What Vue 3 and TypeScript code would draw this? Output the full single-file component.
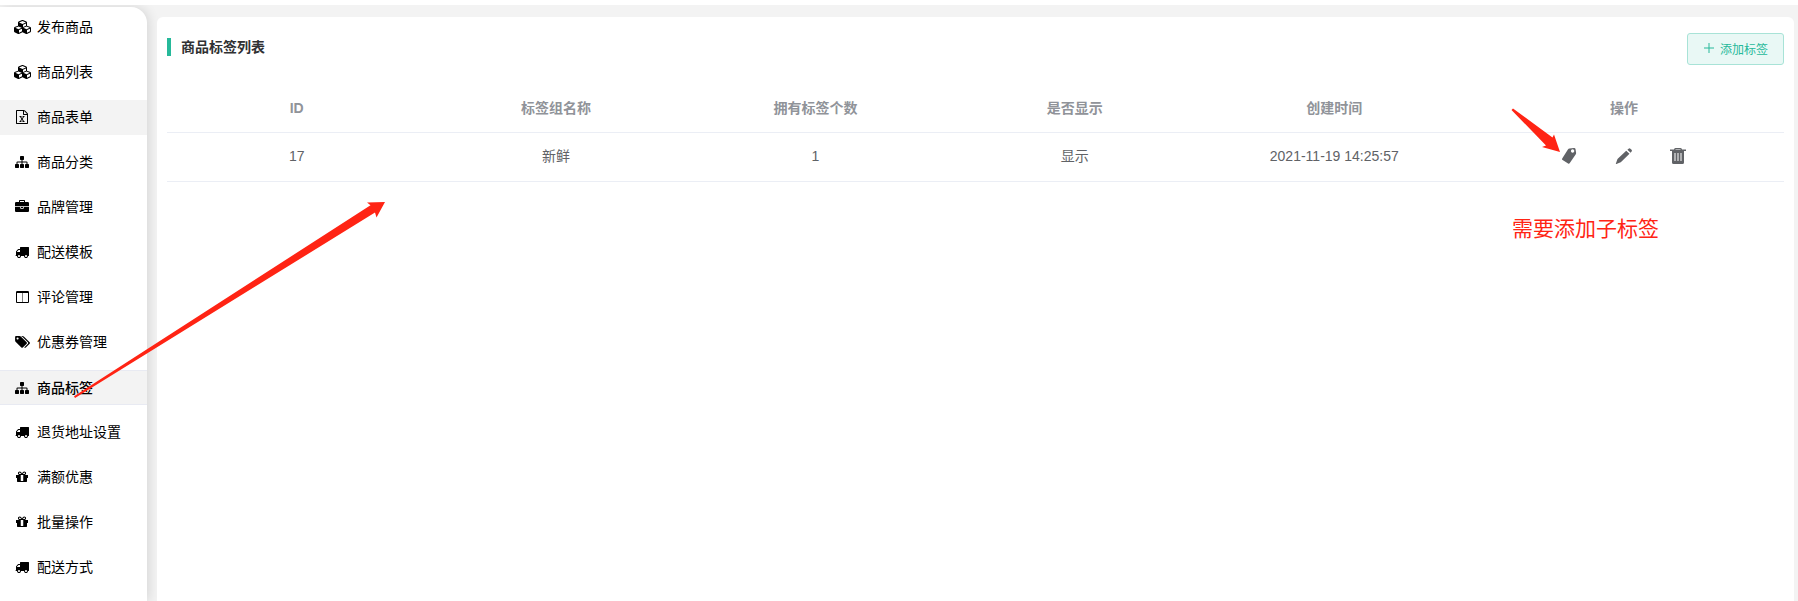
<script setup lang="ts">
interface Icon {
  width: number
  box: string
  path: string
}

interface MenuItem {
  label: string
  icon: string
  state?: 'hover' | 'active'
}

interface TagGroup {
  id: number
  name: string
  count: number
  visible: boolean
  createdAt: string
}

const icons: Record<string, Icon> = {
  cubes: {
    width: 17,
    box: '0 0 2176 1792',
    path: 'M640 1632l384-192v-314l-384 164v342zm-64-454l404-173-404-173-404 173zm1088 454l384-192v-314l-384 164v342zm-64-454l404-173-404-173-404 173zm-448-293l384-165v-266l-384 164v267zm-64-379l441-189-441-189-441 189zm1088 518v416q0 36-19 67t-52 47l-448 224q-25 14-57 14t-57-14l-448-224q-4-2-7-4-2 2-7 4l-448 224q-25 14-57 14t-57-14l-448-224q-33-16-52-47t-19-67v-416q0-38 21.5-70t56.5-48l434-186v-400q0-38 21.5-70t56.5-48l448-192q23-10 50-10t50 10l448 192q35 16 56.5 48t21.5 70v400l434 186q36 16 57 48t21 70z',
  },
  excel: {
    width: 14,
    box: '0 0 1792 1792',
    path: 'M1596 380q28 28 48 76t20 88v1152q0 40-28 68t-68 28h-1344q-40 0-68-28t-28-68v-1600q0-40 28-68t68-28h896q40 0 88 20t76 48zm-444-244v376h376q-10-29-22-41l-313-313q-12-12-41-22zm384 1528v-1024h-416q-40 0-68-28t-28-68v-416h-768v1536h1280zm-979-234v106h281v-106h-75l103-161q5-7 10-16.5t7.5-13.5 3.5-4h2q1 4 5 10 2 4 4.5 7.5t6 8 6.5 8.5l107 161h-76v106h291v-106h-68l-192-273 195-282h67v-107h-279v107h74l-103 159q-4 7-10 16.5t-9 13.5l-2 3h-2q-1-4-5-10-6-11-17-23l-106-159h76v-107h-290v107h68l189 272-194 283h-68z',
  },
  sitemap: {
    width: 14,
    box: '0 0 1792 1792',
    path: 'M1792 1248v320q0 40-28 68t-68 28h-320q-40 0-68-28t-28-68v-320q0-40 28-68t68-28h96v-192h-512v192h96q40 0 68 28t28 68v320q0 40-28 68t-68 28h-320q-40 0-68-28t-28-68v-320q0-40 28-68t68-28h96v-192h-512v192h96q40 0 68 28t28 68v320q0 40-28 68t-68 28h-320q-40 0-68-28t-28-68v-320q0-40 28-68t68-28h96v-192q0-52 38-90t90-38h512v-192h-96q-40 0-68-28t-28-68v-320q0-40 28-68t68-28h320q40 0 68 28t28 68v320q0 40-28 68t-68 28h-96v192h512q52 0 90 38t38 90v192h96q40 0 68 28t28 68z',
  },
  briefcase: {
    width: 14,
    box: '0 0 1792 1792',
    path: 'M640 256h512v-128h-512v128zm1152 640v480q0 66-47 113t-113 47h-1472q-66 0-113-47t-47-113v-480h672v160q0 26 19 45t45 19h320q26 0 45-19t19-45v-160h672zm-768 0v128h-256v-128h256zm768-480v384h-1792v-384q0-66 47-113t113-47h352v-160q0-40 28-68t68-28h576q40 0 68 28t28 68v160h352q66 0 113 47t47 113z',
  },
  truck: {
    width: 14,
    box: '0 0 1792 1792',
    path: 'M640 1408q0-52-38-90t-90-38-90 38-38 90 38 90 90 38 90-38 38-90zm-384-512h384v-256h-158q-13 0-22 9l-195 195q-9 9-9 22v30zm1280 512q0-52-38-90t-90-38-90 38-38 90 38 90 90 38 90-38 38-90zm256-1088v1024q0 15-4 26.5t-13.5 18.5-16.5 11.5-23.5 6-22.5 2-25.5 0-22.5-.5q0 106-75 181t-181 75-181-75-75-181h-384q0 106-75 181t-181 75-181-75-75-181h-64q-3 0-22.5.5t-25.5 0-22.5-2-23.5-6-16.5-11.5-13.5-18.5-4-26.5q0-26 19-45t45-19v-320q0-8-.5-35t0-38 2.5-34.5 6.5-37 14-30.5 22.5-30l198-198q19-19 50.5-32t58.5-13h160v-192q0-26 19-45t45-19h1024q26 0 45 19t19 45z',
  },
  columns: {
    width: 13,
    box: '0 0 1664 1792',
    path: 'M160 1536h672v-1152h-704v1120q0 13 9.5 22.5t22.5 9.5zm1376-32v-1120h-640v1152h608q13 0 22.5-9.5t9.5-22.5zm128-1216v1216q0 66-47 113t-113 47h-1344q-66 0-113-47t-47-113v-1216q0-66 47-113t113-47h1344q66 0 113 47t47 113z',
  },
  tags: {
    width: 15,
    box: '0 0 1899 1792',
    path: 'M448 448q0-53-37.5-90.5t-90.5-37.5-90.5 37.5-37.5 90.5 37.5 90.5 90.5 37.5 90.5-37.5 37.5-90.5zm1067 576q0 53-37 90l-491 492q-39 37-91 37-53 0-90-37l-715-716q-38-37-64.5-101t-26.5-117v-416q0-52 38-90t90-38h416q53 0 117 26.5t102 64.5l715 714q37 39 37 91zm384 0q0 53-37 90l-491 492q-39 37-91 37-36 0-59-14t-53-45l470-470q37-37 37-90 0-52-37-91l-715-714q-38-38-102-64.5t-117-26.5h224q53 0 117 26.5t102 64.5l715 714q37 39 37 91z',
  },
  gift: {
    width: 14,
    box: '0 0 1792 1792',
    path: 'M1056 1356v-716h-320v716q0 25 18 38.5t46 13.5h192q28 0 46-13.5t18-38.5zm-456-844h195l-126-161q-26-31-69-31-40 0-68 28t-28 68 28 68 68 28zm688-96q0-40-28-68t-68-28q-43 0-69 31l-125 161h194q40 0 68-28t28-68zm376 256v320q0 14-9 23t-23 9h-96v416q0 40-28 68t-68 28h-1088q-40 0-68-28t-28-68v-416h-96q-14 0-23-9t-9-23v-320q0-14 9-23t23-9h440q-93 0-158.5-65.5t-65.5-158.5 65.5-158.5 158.5-65.5q107 0 168 77l128 165 128-165q61-77 168-77 93 0 158.5 65.5t65.5 158.5-65.5 158.5-158.5 65.5h440q14 0 23 9t9 23z',
  },
}

const menu: MenuItem[] = [
  { label: '发布商品', icon: 'cubes' },
  { label: '商品列表', icon: 'cubes' },
  { label: '商品表单', icon: 'excel', state: 'hover' },
  { label: '商品分类', icon: 'sitemap' },
  { label: '品牌管理', icon: 'briefcase' },
  { label: '配送模板', icon: 'truck' },
  { label: '评论管理', icon: 'columns' },
  { label: '优惠券管理', icon: 'tags' },
  { label: '商品标签', icon: 'sitemap', state: 'active' },
  { label: '退货地址设置', icon: 'truck' },
  { label: '满额优惠', icon: 'gift' },
  { label: '批量操作', icon: 'gift' },
  { label: '配送方式', icon: 'truck' },
]

const headers: string[] = ['ID', '标签组名称', '拥有标签个数', '是否显示', '创建时间', '操作']

const groups: TagGroup[] = [
  { id: 17, name: '新鲜', count: 1, visible: true, createdAt: '2021-11-19 14:25:57' },
]
</script>

<template>
  <div class="page">
    <nav class="sidebar">
      <a
        v-for="item in menu"
        :key="item.label"
        href="#"
        class="menu-item"
        :class="item.state"
      >
        <span class="menu-icon">
          <svg :width="icons[item.icon].width" height="14" :viewBox="icons[item.icon].box" aria-hidden="true">
            <path :d="icons[item.icon].path" />
          </svg>
        </span>
        <span>{{ item.label }}</span>
      </a>
    </nav>

    <main class="panel">
      <header class="panel-head">
        <h1 class="title">商品标签列表</h1>
        <button type="button" class="add">
          <svg width="10" height="10" viewBox="0 0 10 10" aria-hidden="true">
            <path d="M5 0v10M0 5h10" />
          </svg>
          <span>添加标签</span>
        </button>
      </header>

      <table class="table">
        <colgroup>
          <col v-for="n in 5" :key="n" />
          <col class="col-actions" />
        </colgroup>
        <thead>
          <tr>
            <th v-for="h in headers" :key="h" scope="col">{{ h }}</th>
          </tr>
        </thead>
        <tbody>
          <tr v-for="g in groups" :key="g.id">
            <td>{{ g.id }}</td>
            <td>{{ g.name }}</td>
            <td>{{ g.count }}</td>
            <td>{{ g.visible ? '显示' : '隐藏' }}</td>
            <td>{{ g.createdAt }}</td>
            <td>
              <div class="actions">
                <button type="button" aria-label="子标签">
                  <svg width="18" height="18" viewBox="0 0 18 18" aria-hidden="true">
                    <path
                      fill-rule="evenodd"
                      d="M8.500 1.500 12.800 1q1.400-.2 1.700 1.100l.6 3.700q.1.800-.3 1.400L8.800 16q-.7 1-1.700.4L1.600 13.100q-1-.7-.4-1.700L6.900 2.500q.6-.8 1.600-1zM11.600 2.300a1.700 1.700 0 1 0 .01 0z"
                    />
                  </svg>
                </button>
                <button type="button" aria-label="编辑">
                  <svg width="18" height="18" viewBox="0 0 18 18" aria-hidden="true">
                    <path d="M11.200 3.700l3.300 3.100-8.200 7.900q-.5.5-1.200.8l-3.700 1.500q-.8.2-.5-.6l1.400-3.900q.2-.6.700-1.100zM12.400 2.700l1.200-1q.9-.8 1.800 0l1.200 1.100q.8.9 0 1.800l-1 1.200z" />
                  </svg>
                </button>
                <button type="button" aria-label="删除">
                  <svg width="18" height="18" viewBox="0 0 18 18" aria-hidden="true">
                    <path
                      fill-rule="evenodd"
                      d="M5 2.500q0-1.500 1.500-1.500h5q1.500 0 1.500 1.500h4v1.500H1v-1.500zM6.500 2.500h5v-.500h-5zM3 4h12v11.500q0 1.500-1.500 1.500h-9q-1.500 0-1.500-1.500zM5.500 6v8h1v-8zM8.500 6v8h1v-8zM11.500 6v8h1v-8z"
                    />
                  </svg>
                </button>
              </div>
            </td>
          </tr>
        </tbody>
      </table>
    </main>

    <svg class="mark mark-menu" width="312" height="198" viewBox="0 0 312 198" aria-hidden="true">
      <path d="M311 2 293 2.500 296.500 5.200 0 196.300 1 198 301 12.500 302.500 17.500z" />
    </svg>
    <svg class="mark mark-action" width="50" height="46" viewBox="0 0 50 46" aria-hidden="true">
      <path d="M49 44 43 26.500 41.500 29.500 2 .5.5 2 35 37.500 31 39z" />
    </svg>
    <p class="mark note">需要添加子标签</p>
  </div>
</template>

<style>
body {
  margin: 0;
  background: #f3f3f3;
}
</style>

<style scoped>
.page {
  position: relative;
  display: flex;
  box-sizing: border-box;
  min-height: 100vh;
  padding-right: 4px;
  border-top: 5px solid #fff;
  overflow: hidden;
  background: #f3f3f3;
  font-family: 'Liberation Sans', 'Noto Sans CJK SC', sans-serif;
  font-size: 14px;
}

.sidebar {
  display: flex;
  flex: none;
  flex-direction: column;
  gap: 10px;
  box-sizing: border-box;
  width: 147px;
  margin-top: 2px;
  padding: 3px 0 16px;
  border-top-right-radius: 16px;
  background: #fff;
  box-shadow: 2px 0 12px rgba(0, 0, 0, 0.12);
}

.menu-item {
  display: flex;
  align-items: center;
  gap: 5px;
  box-sizing: border-box;
  height: 35px;
  padding-bottom: 2px;
  padding-left: 12px;
  color: #000;
  line-height: 20px;
  text-decoration: none;
}

.menu-item.hover {
  background: #f3f3f3;
}

.menu-item.active {
  padding-bottom: 0;
  border-top: 1px solid #e8eaf2;
  border-bottom: 1px solid #e8eaf2;
  background: #f3f3f3;
  font-weight: 500;
}

.menu-icon {
  display: flex;
  justify-content: center;
  width: 20px;
}

.panel {
  flex: 1;
  min-width: 0;
  margin-top: 12px;
  margin-left: 10px;
  padding: 16px 10px;
  border-radius: 6px 6px 0 0;
  background: #fff;
  z-index: 1;
}

.panel-head {
  display: flex;
  align-items: flex-start;
  justify-content: space-between;
}

.title {
  margin: 5px 0 0;
  padding-left: 10px;
  border-left: 4px solid #26b99a;
  color: #303133;
  font-size: 14px;
  font-weight: 700;
  line-height: 18px;
}

.add {
  display: flex;
  align-items: center;
  justify-content: center;
  gap: 6px;
  height: 32px;
  padding: 0 15px 2px 16px;
  border: 1px solid #a8e3d7;
  border-radius: 3px;
  background: #e9f8f5;
  color: #26b99a;
  font-family: inherit;
  font-size: 12px;
}

.add svg {
  fill: none;
  stroke: currentColor;
}

.table {
  width: 100%;
  margin-top: 19px;
  border-collapse: collapse;
  table-layout: fixed;
  color: #606266;
  line-height: 24px;
  text-align: center;
}

.col-actions {
  width: 320px;
}

.table th,
.table td {
  height: 48px;
  padding: 0;
  border-bottom: 1px solid #ebeef5;
}

.table td {
  height: 46px;
  padding-bottom: 2px;
}

.table th {
  color: #909399;
  font-weight: 700;
}

.actions {
  display: flex;
  justify-content: center;
  gap: 36px;
}

.actions button {
  display: flex;
  padding: 0;
  border: 0;
  background: none;
  color: #606266;
}

.actions svg {
  fill: currentColor;
}

.mark {
  position: absolute;
  z-index: 2;
  fill: #ff2414;
  pointer-events: none;
}

.mark-menu {
  top: 195px;
  left: 74px;
}

.mark-action {
  top: 103px;
  right: 237px;
}

.note {
  top: 209px;
  right: 139px;
  margin: 0;
  color: #ff2414;
  font-size: 21px;
  line-height: 30px;
}
</style>
